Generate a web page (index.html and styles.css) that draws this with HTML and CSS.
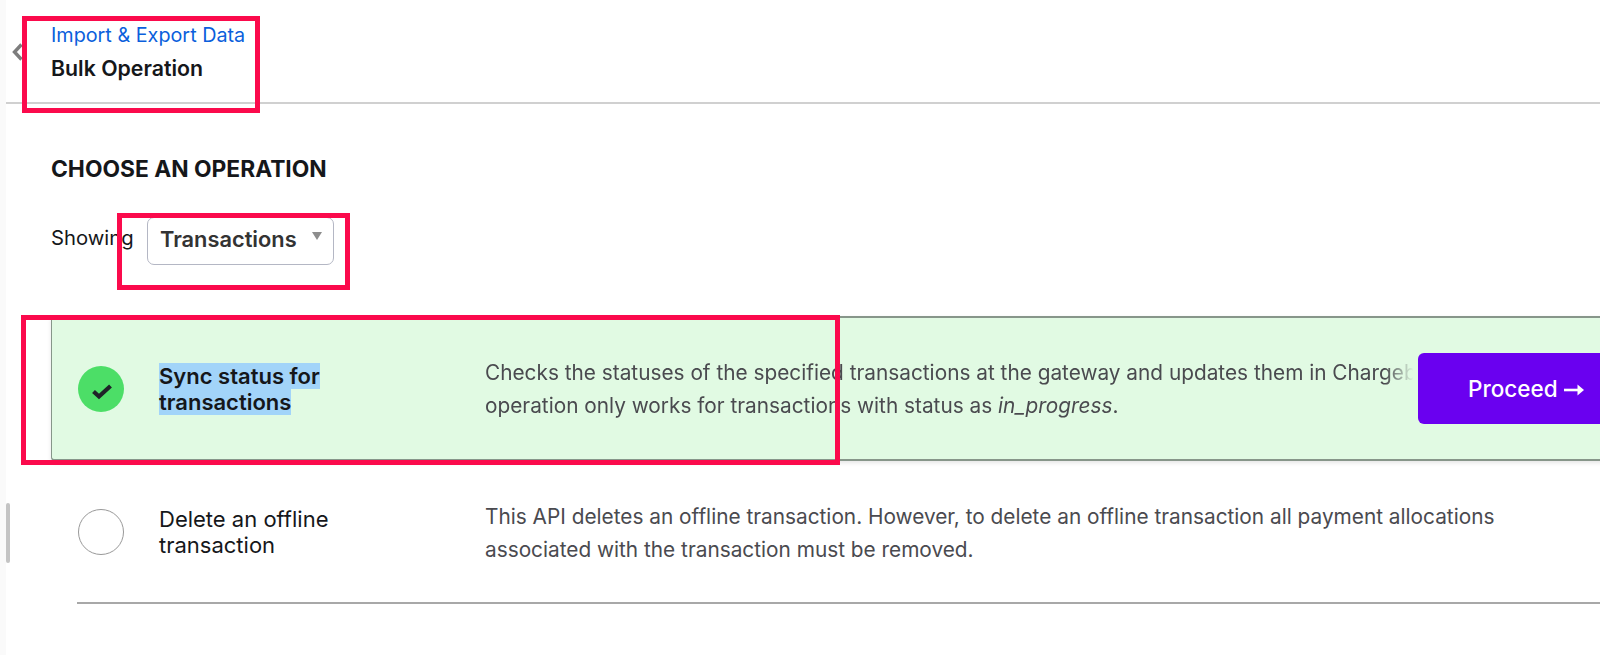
FILE: index.html
```html
<!DOCTYPE html>
<html lang="en">
<head>
    <meta charset="UTF-8">
    <title>Bulk Operation</title>
    <link rel="stylesheet" href="styles.css">
</head>
<body>
    <div class="rail"><span class="rail-thumb"></span></div>
    <div class="page">
        <header class="topbar">
            <svg class="back" width="13" height="20" viewBox="0 0 13 20"><path d="M10.5 2.500 3.500 10l7 7.500" fill="none" stroke="#7d7d7d" stroke-width="3.400"/></svg>
            <div class="crumbs">
                <a href="#" class="crumb-link">Import &amp; Export Data</a>
                <div class="crumb-title">Bulk Operation</div>
            </div>
        </header>

        <main class="content">
            <h2 class="heading">CHOOSE AN OPERATION</h2>
            <div class="filter">
                <span class="filter-label">Showing</span>
                <div class="select">Transactions<span class="select-arrow"></span></div>
            </div>

            <div class="op op-active">
                <span class="radio radio-on">
                    <svg width="24" height="24" viewBox="0 0 24 24"><path d="M4.500 14.500 10 19.500 21.500 9" fill="none" stroke="#1f2328" stroke-width="4.200"/></svg>
                </span>
                <div class="op-title"><span class="selected-text">Sync status for</span><br><span class="selected-text">transactions</span></div>
                <div class="op-desc">Checks the statuses of the specified transactions at the gateway and updates them in Chargebee. This<br>operation only works for transactions with status as <em>in_progress</em>.</div>
                <button class="proceed">Proceed
                    <svg class="proceed-arrow" width="20" height="14" viewBox="0 0 20 14"><path d="M0 7h15" stroke="#fff" stroke-width="2.600"/><path d="M13.500 1.500 20 7l-6.500 5.500z" fill="#fff"/></svg>
                </button>
            </div>

            <div class="op op-plain">
                <span class="radio"></span>
                <div class="op-title">Delete an offline<br>transaction</div>
                <div class="op-desc">This API deletes an offline transaction. However, to delete an offline transaction all payment allocations<br>associated with the transaction must be removed.</div>
            </div>
            <div class="divider"></div>
        </main>
    </div>

    <div class="mark mark-crumbs"></div>
    <div class="mark mark-select"></div>
    <div class="mark mark-op"></div>
</body>
</html>
```

FILE: styles.css
```css
* {
    box-sizing: border-box;
}
html, body {
    height: 100%;
}
body {
    margin: 0;
    display: flex;
    overflow: hidden;
    background: #fff;
    color: #15171a;
    font-family: Inter, "Liberation Sans", sans-serif;
}
.rail {
    flex: 0 0 6px;
    background: #fafafa;
    position: relative;
}
.rail-thumb {
    position: absolute;
    top: 503px;
    left: 6px;
    width: 4px;
    height: 60px;
    border-radius: 2px;
    background: #c4c4c4;
}
.page {
    flex: 1;
    min-width: 0;
}
.topbar {
    height: 104px;
    border-bottom: 2px solid #d0d0d0;
    display: flex;
    margin-left: -6px;
    padding-left: 11px;
}
.back {
    margin-top: 42px;
}
.crumbs {
    margin-left: 27px;
    padding-top: 23px;
}
.crumb-link {
    display: block;
    font-size: 19.800px;
    line-height: 24px;
    color: #0b5fdc;
    text-decoration: none;
}
.crumb-title {
    margin-top: 9px;
    font-size: 21.300px;
    line-height: 24px;
    font-weight: 600;
}
.content {
    padding: 51px 0 0 45px;
}
.heading {
    margin: 0;
    font-size: 22.800px;
    line-height: 28px;
    font-weight: 700;
}
.filter {
    display: flex;
    align-items: flex-start;
    margin-top: 34px;
    height: 99px;
}
.filter-label {
    font-size: 20.250px;
    line-height: 42px;
    width: 96px;
}
.select {
    position: relative;
    width: 187px;
    height: 48px;
    border: 1px solid #b4b7c4;
    border-radius: 7px;
    padding-left: 12px;
    font-size: 21.800px;
    line-height: 42px;
    font-weight: 600;
    color: #333;
}
.select-arrow {
    position: absolute;
    top: 14px;
    right: 11px;
    border-left: 5px solid transparent;
    border-right: 5px solid transparent;
    border-top: 8px solid #8d8d8d;
}
.op {
    display: flex;
    align-items: center;
    height: 141px;
    padding-left: 27px;
    width: 1600px;
}
.op-active {
    height: 145px;
    background: #e1fae3;
    border: 2px solid #87968a;
    border-left-width: 1px;
    border-right: 0;
    border-radius: 4px 0 0 4px;
    box-shadow: 0 2px 4px rgba(0, 0, 0, 0.1);
    padding-left: 26px;
}
.radio {
    flex: 0 0 46px;
    height: 46px;
    border-radius: 50%;
    border: 1.500px solid #999;
    background: #fff;
    display: flex;
    align-items: center;
    justify-content: center;
}
.radio-on {
    background: #4cde67;
    border: 0;
}
.op-title {
    flex: 0 0 326px;
    margin-left: 35px;
    font-size: 22px;
    line-height: 26px;
}
.op-active .op-title {
    font-weight: 600;
}
.selected-text {
    background: #a2d4f9;
}
.op-desc {
    flex: 0 0 auto;
    width: 933px;
    white-space: nowrap;
    font-size: 20.800px;
    line-height: 33px;
    color: #4a4a4f;
}
.op-plain .op-desc {
    padding-top: 2px;
}
.op-active .op-desc {
    overflow: hidden;
    -webkit-mask-image: linear-gradient(to right, #000 96.500%, transparent 99.500%);
    mask-image: linear-gradient(to right, #000 96.500%, transparent 99.500%);
}
.proceed {
    flex: 0 0 200px;
    height: 71px;
    border: 0;
    border-radius: 6px;
    padding: 0 0 0 50px;
    background: #6a00f0;
    color: #fff;
    font-family: inherit;
    font-size: 22.500px;
    font-weight: 500;
    text-align: left;
}
.divider {
    height: 2px;
    margin-left: 26px;
    background: #a8a8a8;
}
/* red annotation boxes drawn over the screenshot */
.mark {
    position: absolute;
    border: 5px solid #fb0a4c;
}
.mark-crumbs {
    left: 22px;
    top: 16px;
    width: 238px;
    height: 97px;
}
.mark-select {
    left: 117px;
    top: 213px;
    width: 233px;
    height: 77px;
}
.mark-op {
    left: 21px;
    top: 315px;
    width: 819px;
    height: 150px;
}
```
